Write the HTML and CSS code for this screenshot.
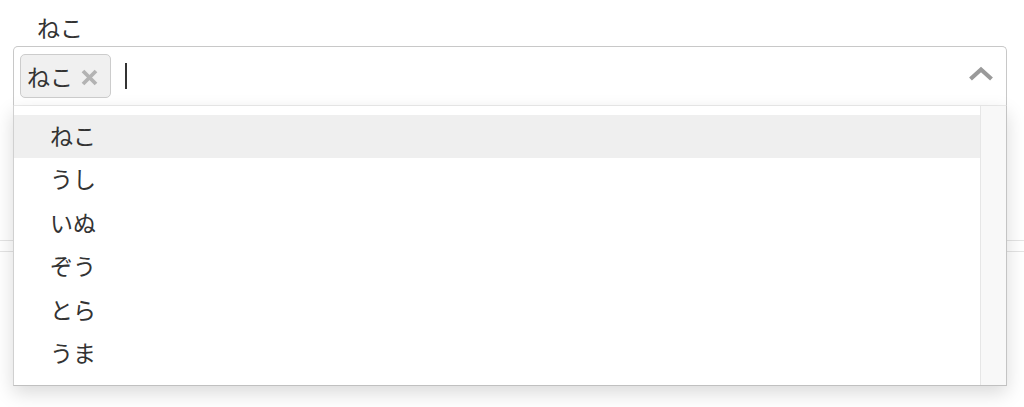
FILE: index.html
```html
<!DOCTYPE html>
<html lang="ja">
<head>
<meta charset="utf-8">
<link rel="stylesheet" href="styles.css">
</head>
<body>
<div class="page">
  <label class="label">ねこ</label>
  <div class="field">
    <div class="select">
      <div class="values">
        <span class="tag">ねこ<svg class="tag-x" width="17" height="17" viewBox="0 0 17 17"><path d="M2 2 L15 15 M15 2 L2 15" stroke="#b3b3b3" stroke-width="3.8" fill="none"/></svg></span>
        <span class="caret"></span>
      </div>
      <svg class="chevron" width="26" height="16" viewBox="0 0 26 16"><path d="M2.5 13 L13 3.5 L23.5 13" fill="none" stroke="#9a9a9a" stroke-width="4.2"/></svg>
    </div>
    <div class="under"></div>
    <div class="rules"><div class="rule"></div><div class="rule"></div></div>
    <div class="menu">
      <ul class="options">
        <li class="opt active">ねこ</li>
        <li class="opt">うし</li>
        <li class="opt">いぬ</li>
        <li class="opt">ぞう</li>
        <li class="opt">とら</li>
        <li class="opt">うま</li>
      </ul>
      <div class="track"></div>
    </div>
  </div>
</div>
</body>
</html>
```
FILE: styles.css
```css
html, body { margin: 0; padding: 0; background: #fff; }
body {
  font-family: "Noto Sans CJK JP", "Noto Sans", sans-serif;
  color: #333;
  width: 1024px;
  height: 407px;
  overflow: hidden;
}
.page { padding-top: 10px; }
.label {
  display: block;
  margin-left: 37px;
  font-size: 23px;
  line-height: 34px;
  height: 36px;
}
.field {
  position: relative;
  margin-left: 13px;
  width: 994px;
}
.select {
  box-sizing: border-box;
  height: 60px;
  border: 1px solid #c8c8c8;
  border-bottom-color: #ececec;
  border-radius: 5px 5px 0 0;
  display: flex;
  align-items: center;
  justify-content: space-between;
  padding: 0 12px 0 6px;
}
.values { display: flex; align-items: center; gap: 14px; }
.tag {
  box-sizing: border-box;
  height: 44px;
  width: 91px;
  border: 1px solid #ccc;
  border-radius: 5px;
  background: #f0f0f0;
  font-size: 23px;
  display: flex;
  align-items: center;
  padding-left: 6px;
  gap: 8px;
}
.tag-x { display: block; margin-top: 2px; }
.caret { width: 2px; height: 26px; background: #333; }
.chevron { margin-top: -4px; }
.under {
  height: 122px;
  border-right: 1px solid #b8b8b8;
}
.rules { padding-top: 12px; margin-left: -13px; width: 1024px; }
.rule { height: 1px; background: #e4e4e4; margin-bottom: 10px; }
.menu {
  position: absolute;
  top: 60px;
  left: 0;
  width: 994px;
  height: 280px;
  box-sizing: border-box;
  background: #fff;
  border-left: 1px solid #d0d0d0;
  border-right: 1px solid #c4c4c4;
  border-bottom: 1px solid #c0c0c0;
  box-shadow: 0 7px 18px rgba(0,0,0,0.15);
  display: flex;
}
.options {
  list-style: none;
  margin: 0;
  padding: 9px 0 0;
  flex: 1;
}
.opt {
  height: 43.4px;
  line-height: 41px;
  padding-left: 36px;
  font-size: 23px;
}
.opt.active { background: #efefef; }
.track {
  width: 25px;
  background: #f8f8f8;
  border-left: 1px solid #e6e6e6;
}
```
